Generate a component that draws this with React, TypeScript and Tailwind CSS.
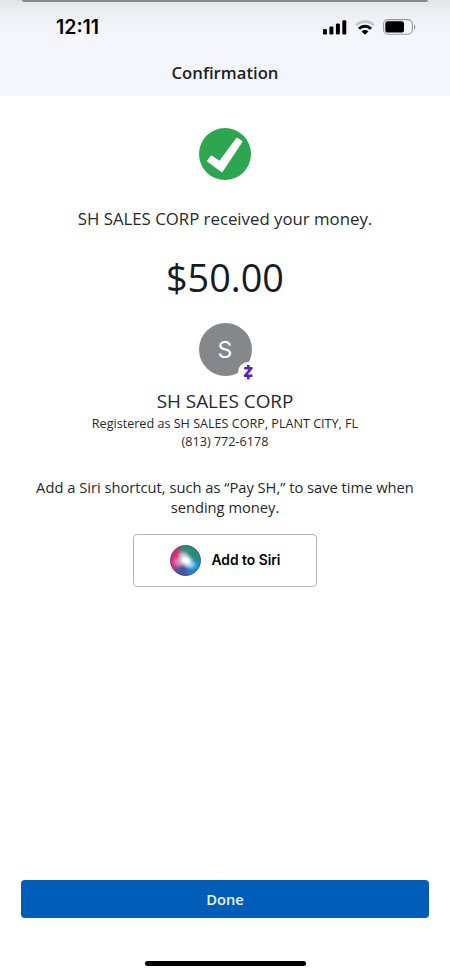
import React from "react";

const SignalIcon = () => (
    <svg width="24" height="15" viewBox="0 0 24 15" fill="#000">
        <rect x="0" y="9" width="4" height="5.5" rx="1.2" />
        <rect x="6.4" y="6.6" width="4" height="7.9" rx="1.2" />
        <rect x="12.9" y="3.5" width="4" height="11" rx="1.2" />
        <rect x="19.3" y="0.3" width="4" height="14.2" rx="1.2" />
    </svg>
);

const WifiIcon = () => (
    <svg width="20" height="15" viewBox="0 0 20 15" fill="none">
        <path d="M1.2 5.3C6 .5 14 .5 18.8 5.3" stroke="#c4c5c9" strokeWidth="2.7" />
        <path d="M4 8.7C7.4 5.4 12.6 5.4 16 8.7" stroke="#000" strokeWidth="2.9" />
        <path d="M6.6 11.4a4.8 4.8 0 0 1 6.8 0L10 14.8z" fill="#000" />
    </svg>
);

const BatteryIcon = () => (
    <svg width="33" height="16" viewBox="0 0 33 16" fill="none">
        <rect x="0.6" y="0.6" width="28.8" height="14.6" rx="4.2" stroke="#97989c" strokeWidth="1.1" />
        <rect x="2.3" y="2.3" width="18.7" height="11.2" rx="2.6" fill="#000" />
        <path d="M31 5.4c1.8.6 1.8 4.4 0 5z" fill="#97989c" />
    </svg>
);

const CheckBadge = () => (
    <svg width="52" height="52" viewBox="0 0 52 52">
        <circle cx="26" cy="26" r="26" fill="#2ea651" />
        <path
            d="M9.2 32.8 12.3 28.7 20.8 34.2 38 10.8 42.3 13.6 22.9 43z"
            fill="#fff"
            stroke="#fff"
            strokeWidth="2.2"
            strokeLinejoin="round"
        />
    </svg>
);

const ZelleMark = () => (
    <svg width="20" height="20" viewBox="0 0 20 20" className="absolute left-[39px] top-[39px]">
        <circle cx="10" cy="10" r="10" fill="#fff" />
        <path
            d="M10.3 3v3M10.3 14.2v3.2M6.2 6.2h7.2L7 13.8h7.4"
            fill="none"
            stroke="#5a1fc0"
            strokeWidth="2.6"
            strokeLinejoin="round"
        />
    </svg>
);

const SiriOrb = () => (
    <svg width="31" height="31" viewBox="0 0 31 31">
        <defs>
            <clipPath id="orb">
                <circle cx="15.5" cy="15.5" r="15.2" />
            </clipPath>
            <radialGradient id="core">
                <stop offset="0" stopColor="#fff" />
                <stop offset="0.35" stopColor="#f4f8ff" stopOpacity="0.95" />
                <stop offset="1" stopColor="#b8d5f0" stopOpacity="0" />
            </radialGradient>
            <filter id="soft" x="-50%" y="-50%" width="200%" height="200%">
                <feGaussianBlur stdDeviation="1.5" />
            </filter>
        </defs>
        <g clipPath="url(#orb)">
            <rect width="31" height="31" fill="#4a4a80" />
            <g filter="url(#soft)">
                <path d="M8 -4h27v19L15 16z" fill="#2a8c78" />
                <path d="M-4 2H8l8 14-9 13H-4z" fill="#cc3078" />
                <path d="M15 16 35 14v21H13z" fill="#2086c8" />
                <path d="M4 23l12-7 3 19H6z" fill="#4858a0" />
                <ellipse cx="9" cy="17" rx="5" ry="4" fill="#e080b0" />
                <ellipse cx="13" cy="10" rx="4" ry="3" fill="#b8a8b8" />
                <ellipse cx="21" cy="20" rx="5" ry="3" fill="#68c8e4" />
            </g>
            <ellipse cx="16" cy="15.5" rx="10" ry="7.5" transform="rotate(35 16 15.5)" fill="url(#core)" />
        </g>
        <circle cx="15.5" cy="15.5" r="14.9" fill="none" stroke="#464668" strokeOpacity="0.4" strokeWidth="0.8" />
    </svg>
);

const Header = () => (
    <header className="h-24 shrink-0 overflow-hidden bg-[linear-gradient(#e2e3e7_0px,#eceef2_12px,#f4f6fb_34px)]">
        <div className="mx-[22px] h-[2px] rounded-b-xl bg-[#88888b]" />
        <div className="flex h-[50px] items-center justify-between pl-[56px] pr-[34px]">
            <span className="mt-[2px] font-['Inter'] text-[19.5px] font-semibold leading-none text-black">12:11</span>
            <div className="flex items-center">
                <SignalIcon />
                <span className="ml-[8px] mr-[8px]">
                    <WifiIcon />
                </span>
                <BatteryIcon />
            </div>
        </div>
        <h1 className="mt-[9px] text-center text-[16.7px] font-semibold leading-6 text-[#202328]">Confirmation</h1>
    </header>
);

const App = () => {
    return (
        <div className="flex h-[975px] w-[450px] flex-col overflow-hidden bg-white font-['Open_Sans',sans-serif] text-[#25282c]">
            <Header />
            <main className="flex flex-1 flex-col items-center pt-8 text-center">
                <CheckBadge />
                <p className="mt-[27px] text-[16.8px] leading-6">SH SALES CORP received your money.</p>
                <p className="mt-[23px] text-[37.8px] leading-[48px] text-[#171a1e]">$50.00</p>
                <div className="relative mt-[21px] flex size-[53px] items-center justify-center rounded-full bg-[#84888b]">
                    <span className="mt-[2px] font-['Inter'] text-[23px] leading-none text-white">S</span>
                    <ZelleMark />
                </div>
                <h2 className="mt-[13px] text-[18.9px] leading-6">SH SALES CORP</h2>
                <p className="mt-[2px] text-[12.6px] leading-[18px]">Registered as SH SALES CORP, PLANT CITY, FL</p>
                <p className="text-[12.6px] leading-[18px]">(813) 772-6178</p>
                <p className="mt-[26px] text-[14.7px] leading-5">
                    Add a Siri shortcut, such as “Pay SH,” to save time when
                    <br />
                    sending money.
                </p>
                <button className="mt-[17px] flex h-[53px] w-[184px] items-center justify-center gap-[11px] rounded border border-[#b4b4b6] bg-white">
                    <SiriOrb />
                    <span className="whitespace-nowrap font-['Inter'] text-[13.8px] font-semibold text-black">Add to Siri</span>
                </button>
            </main>
            <footer className="flex flex-col items-center px-[21px] pb-[9px]">
                <button className="h-[38px] w-full rounded bg-[#005eb8] text-[14.7px] font-semibold text-[#eaf4ff]">Done</button>
                <div className="mt-[43px] h-[5px] w-[161px] rounded-full bg-black" />
            </footer>
        </div>
    );
};

export default App;
